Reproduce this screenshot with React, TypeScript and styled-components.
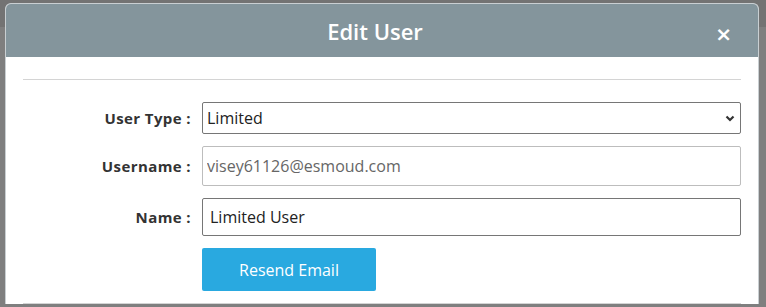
import styled, { createGlobalStyle } from "styled-components";

const GlobalStyle = createGlobalStyle`
  html, body {
    margin: 0;
    padding: 0;
  }
  body {
    font-family: "Open Sans", "Liberation Sans", sans-serif;
    background: #7e7e7e;
    overflow: hidden;
  }
`;

const Backdrop = styled.div`
  width: 766px;
  height: 307px;
  background: linear-gradient(to bottom, #737373 0, #737373 27px, #7f7f7f 27px);
  padding: 3px 0 0 5px;
  box-sizing: border-box;
  overflow: hidden;
`;

const Modal = styled.div`
  width: 754px;
  background: #fff;
  border-radius: 6px 6px 0 0;
  border: 1px solid #c9cfd2;
  border-bottom: none;
  box-sizing: border-box;
  overflow: hidden;
`;

const Header = styled.div`
  position: relative;
  height: 53px;
  background: #84959c;
  display: flex;
  align-items: center;
  justify-content: center;
  padding-right: 14px;
`;

const Title = styled.h2`
  margin: 0;
  color: #fff;
  font-size: 22px;
  font-weight: 600;
`;

const Close = styled.button`
  position: absolute;
  right: 26px;
  top: 20px;
  border: none;
  background: none;
  padding: 0;
  color: #fff;
  font-family: "DejaVu Sans", sans-serif;
  font-size: 20px;
  font-weight: 700;
  line-height: 1;
  cursor: pointer;
`;

const Body = styled.div`
  padding: 22px 17px 0 17px;
`;

const Rule = styled.hr`
  margin: 0;
  border: none;
  border-top: 1px solid #d4d4d4;
`;

const Form = styled.div`
  display: grid;
  grid-template-columns: 168px 1fr;
  column-gap: 11px;
  align-items: center;
  padding: 22px 0 12px;
`;

const Label = styled.label<{ $gap: number }>`
  grid-column: 1;
  text-align: right;
  font-size: 15px;
  font-weight: 700;
  letter-spacing: 0.4px;
  color: #333;
  margin-top: ${(p) => p.$gap}px;
  white-space: pre;
`;

const Field = styled.div<{ $gap: number }>`
  grid-column: 2;
  position: relative;
  margin-top: ${(p) => p.$gap}px;
`;

const Input = styled.input<{ $h: number; $muted?: boolean }>`
  display: block;
  width: 100%;
  height: ${(p) => p.$h}px;
  box-sizing: border-box;
  padding: 0 ${(p) => (p.$muted ? 4 : 7)}px;
  font-family: inherit;
  font-size: 16px;
  color: ${(p) => (p.$muted ? "#666" : "#222")};
  background: #fff;
  border: 1px solid ${(p) => (p.$muted ? "#bdbdbd" : "#767676")};
  border-radius: 2px;
  outline: none;
`;

const Select = styled.select`
  display: block;
  width: 100%;
  height: 32px;
  box-sizing: border-box;
  padding: 0 4px;
  appearance: none;
  font-family: inherit;
  font-size: 16px;
  color: #222;
  background: #fff;
  border: 1px solid #767676;
  border-radius: 2px;
  outline: none;
`;

const Chevron = styled.svg`
  position: absolute;
  right: 6px;
  top: 13px;
  pointer-events: none;
`;

const Button = styled.button`
  grid-column: 2;
  justify-self: start;
  margin-top: 12px;
  width: 174px;
  height: 43px;
  border: none;
  border-radius: 2px;
  background: #29a9e0;
  color: #fff;
  font-family: inherit;
  font-size: 16px;
  cursor: pointer;
`;

export default function App() {
  return (
    <>
      <GlobalStyle />
      <Backdrop>
        <Modal>
          <Header>
            <Title>Edit User</Title>
            <Close aria-label="Close">×</Close>
          </Header>
          <Body>
            <Rule />
            <Form>
              <Label $gap={0}>User Type :</Label>
              <Field $gap={0}>
                <Select defaultValue="Limited">
                  <option>Admin</option>
                  <option>Limited</option>
                </Select>
                <Chevron width="10" height="7" viewBox="0 0 10 7">
                  <path d="M1.5 1.5 L5 5 L8.5 1.5" fill="none" stroke="#333" strokeWidth="2.2" />
                </Chevron>
              </Field>
              <Label $gap={12}>Username :</Label>
              <Field $gap={12}>
                <Input $h={40} $muted readOnly value="visey61126@esmoud.com" />
              </Field>
              <Label $gap={12}>Name :</Label>
              <Field $gap={12}>
                <Input $h={38} defaultValue="Limited User" />
              </Field>
              <Button>Resend Email</Button>
            </Form>
            <Rule />
          </Body>
        </Modal>
      </Backdrop>
    </>
  );
}
